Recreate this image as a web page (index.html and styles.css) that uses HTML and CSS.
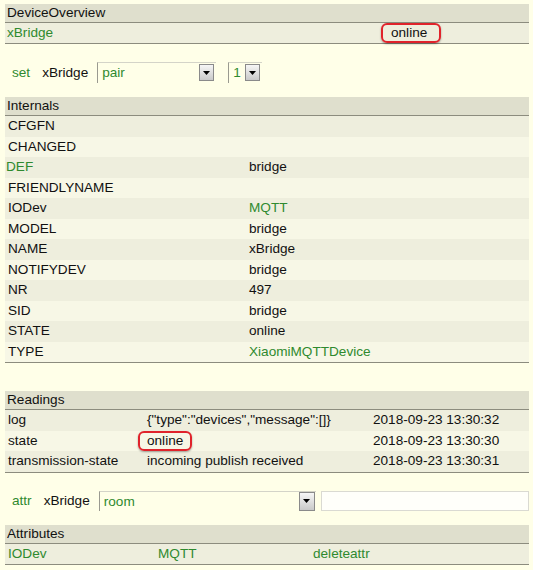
FILE: index.html
```html
<!DOCTYPE html>
<html>
<head>
<meta charset="utf-8">
<link rel="stylesheet" href="styles.css">
</head>
<body>
<div class="page">
  <table class="block overview">
    <colgroup><col class="ov1"><col></colgroup>
    <tr class="hdr"><td colspan="2">DeviceOverview</td></tr>
    <tr class="odd last"><td><a class="lnk">xBridge</a></td><td class="ovstate"><span class="hl hl-ov">online</span></td></tr>
  </table>

  <div class="cmd">
    <span class="lnk cmdname">set</span>
    <span class="devname">xBridge</span>
    <span class="sel sel-pair"><span class="selval">pair</span><span class="arrow"><svg width="7" height="4" viewBox="0 0 7 4"><path d="M0 0H7L3.5 4Z" fill="#000"/></svg></span></span>
    <span class="sel sel-num"><span class="selval">1</span><span class="arrow"><svg width="7" height="4" viewBox="0 0 7 4"><path d="M0 0H7L3.5 4Z" fill="#000"/></svg></span></span>
  </div>

  <table class="block internals">
    <colgroup><col class="in1"><col></colgroup>
    <tr class="hdr"><td colspan="2">Internals</td></tr>
    <tr class="odd"><td>CFGFN</td><td></td></tr>
    <tr class="even"><td>CHANGED</td><td></td></tr>
    <tr class="odd"><td class="nopad"><a class="lnk">DEF</a></td><td>bridge</td></tr>
    <tr class="even"><td>FRIENDLYNAME</td><td></td></tr>
    <tr class="odd"><td>IODev</td><td><a class="lnk">MQTT</a></td></tr>
    <tr class="even"><td>MODEL</td><td>bridge</td></tr>
    <tr class="odd"><td>NAME</td><td>xBridge</td></tr>
    <tr class="even"><td>NOTIFYDEV</td><td>bridge</td></tr>
    <tr class="odd"><td>NR</td><td>497</td></tr>
    <tr class="even"><td>SID</td><td>bridge</td></tr>
    <tr class="odd"><td>STATE</td><td>online</td></tr>
    <tr class="even last"><td>TYPE</td><td><a class="lnk">XiaomiMQTTDevice</a></td></tr>
  </table>

  <table class="block readings">
    <colgroup><col class="rd1"><col class="rd2"><col></colgroup>
    <tr class="hdr"><td colspan="3">Readings</td></tr>
    <tr class="odd"><td>log</td><td>{"type":"devices","message":[]}</td><td>2018-09-23 13:30:32</td></tr>
    <tr class="even"><td>state</td><td><span class="hl hl-rd">online</span></td><td>2018-09-23 13:30:30</td></tr>
    <tr class="odd last"><td>transmission-state</td><td>incoming publish received</td><td>2018-09-23 13:30:31</td></tr>
  </table>

  <div class="cmd cmd-attr">
    <span class="lnk cmdname">attr</span>
    <span class="devname">xBridge</span>
    <span class="sel sel-room"><span class="selval">room</span><span class="arrow big"><svg width="7" height="4" viewBox="0 0 7 4"><path d="M0 0H7L3.5 4Z" fill="#000"/></svg></span></span>
    <span class="textin"></span>
  </div>

  <table class="block attributes">
    <colgroup><col class="at1"><col class="at2"><col></colgroup>
    <tr class="hdr"><td colspan="3">Attributes</td></tr>
    <tr class="odd last"><td><a class="lnk">IODev</a></td><td><a class="lnk">MQTT</a></td><td><a class="lnk">deleteattr</a></td></tr>
  </table>
</div>
</body>
</html>
```

FILE: styles.css
```css
html, body {
  margin: 0;
  padding: 0;
  background: #FFFFE8;
}
body {
  font-family: "Liberation Sans", Arial, sans-serif;
  font-size: 13.6px;
  color: #111;
}
.page {
  padding: 4px 4px 0 5px;
}
.lnk {
  color: #2F8A2F;
  text-decoration: none;
}
.block {
  width: 524px;
  border-collapse: collapse;
  table-layout: fixed;
}
.block td {
  padding: 0 0 0 3px;
  white-space: nowrap;
  vertical-align: middle;
}
.block td.nopad {
  padding-left: 1px;
}
.hdr td {
  background: #DFDFCD;
  height: 18px;
  line-height: 18px;
  padding-left: 2px;
  border-bottom: 1px solid #8C8C7E;
}
.odd td {
  background: #EEEEDD;
  height: 20.5px;
  line-height: 20.5px;
}
.even td {
  background: #F7F7E6;
  height: 20.5px;
  line-height: 20.5px;
}
.overview .odd td {
  height: 20px;
  line-height: 20px;
}
.last td {
  border-bottom: 1px solid #8C8C7E;
}
.overview .odd td:first-child {
  padding-left: 2px;
}
.readings {
  margin-top: 28px;
}
.ov1 { width: 376px; }
.in1 { width: 241px; }
.rd1 { width: 139px; }
.rd2 { width: 226px; }
.at1 { width: 150px; }
.at2 { width: 155px; }

.ovstate {
  padding-left: 0 !important;
}
.hl {
  display: inline-block;
  border: 2px solid #E0232B;
  border-radius: 6px;
  box-shadow: 0 1px 2px rgba(0,0,0,0.35);
  line-height: 16px;
  vertical-align: middle;
}
.hl-ov {
  padding: 0 12px 0 8px;
}
.hl-rd {
  padding: 0 7px;
  margin-left: -9px;
}

.cmd {
  display: flex;
  align-items: center;
  height: 21px;
  margin: 18px 0 14px 0;
  padding-left: 7px;
}
.cmd-attr {
  margin: 18px 0 14px 0;
  height: 20px;
}
.cmdname {
  margin-right: 12px;
}
.devname {
  margin-right: 9px;
}
.sel {
  display: inline-flex;
  align-items: flex-start;
  box-sizing: border-box;
  height: 21px;
  border-left: 1px solid #9A9A90;
  border-top: 1px solid #D4D4C8;
  background: #FFFFE8;
  color: #2F8A2F;
}
.selval {
  flex: 1;
  padding-left: 4px;
  line-height: 20px;
}
.sel-pair { width: 119px; }
.sel-num { width: 34px; margin-left: 12px; }
.sel-room { width: 218px; height: 20px; }
.arrow {
  box-sizing: border-box;
  width: 15px;
  height: 17px;
  margin: 1px 2px 0 0;
  border: 1px solid #8A8A8A;
  background: linear-gradient(#F6F6F6, #C9C9C9);
  display: flex;
  align-items: center;
  justify-content: center;
}
.arrow.big {
  height: 19px;
  width: 16px;
  margin: 0 1px 0 0;
}
.textin {
  box-sizing: border-box;
  width: 209px;
  height: 20px;
  margin-left: 5px;
  border: 1px solid #DADAD2;
  background: #FFFFFA;
}
```
